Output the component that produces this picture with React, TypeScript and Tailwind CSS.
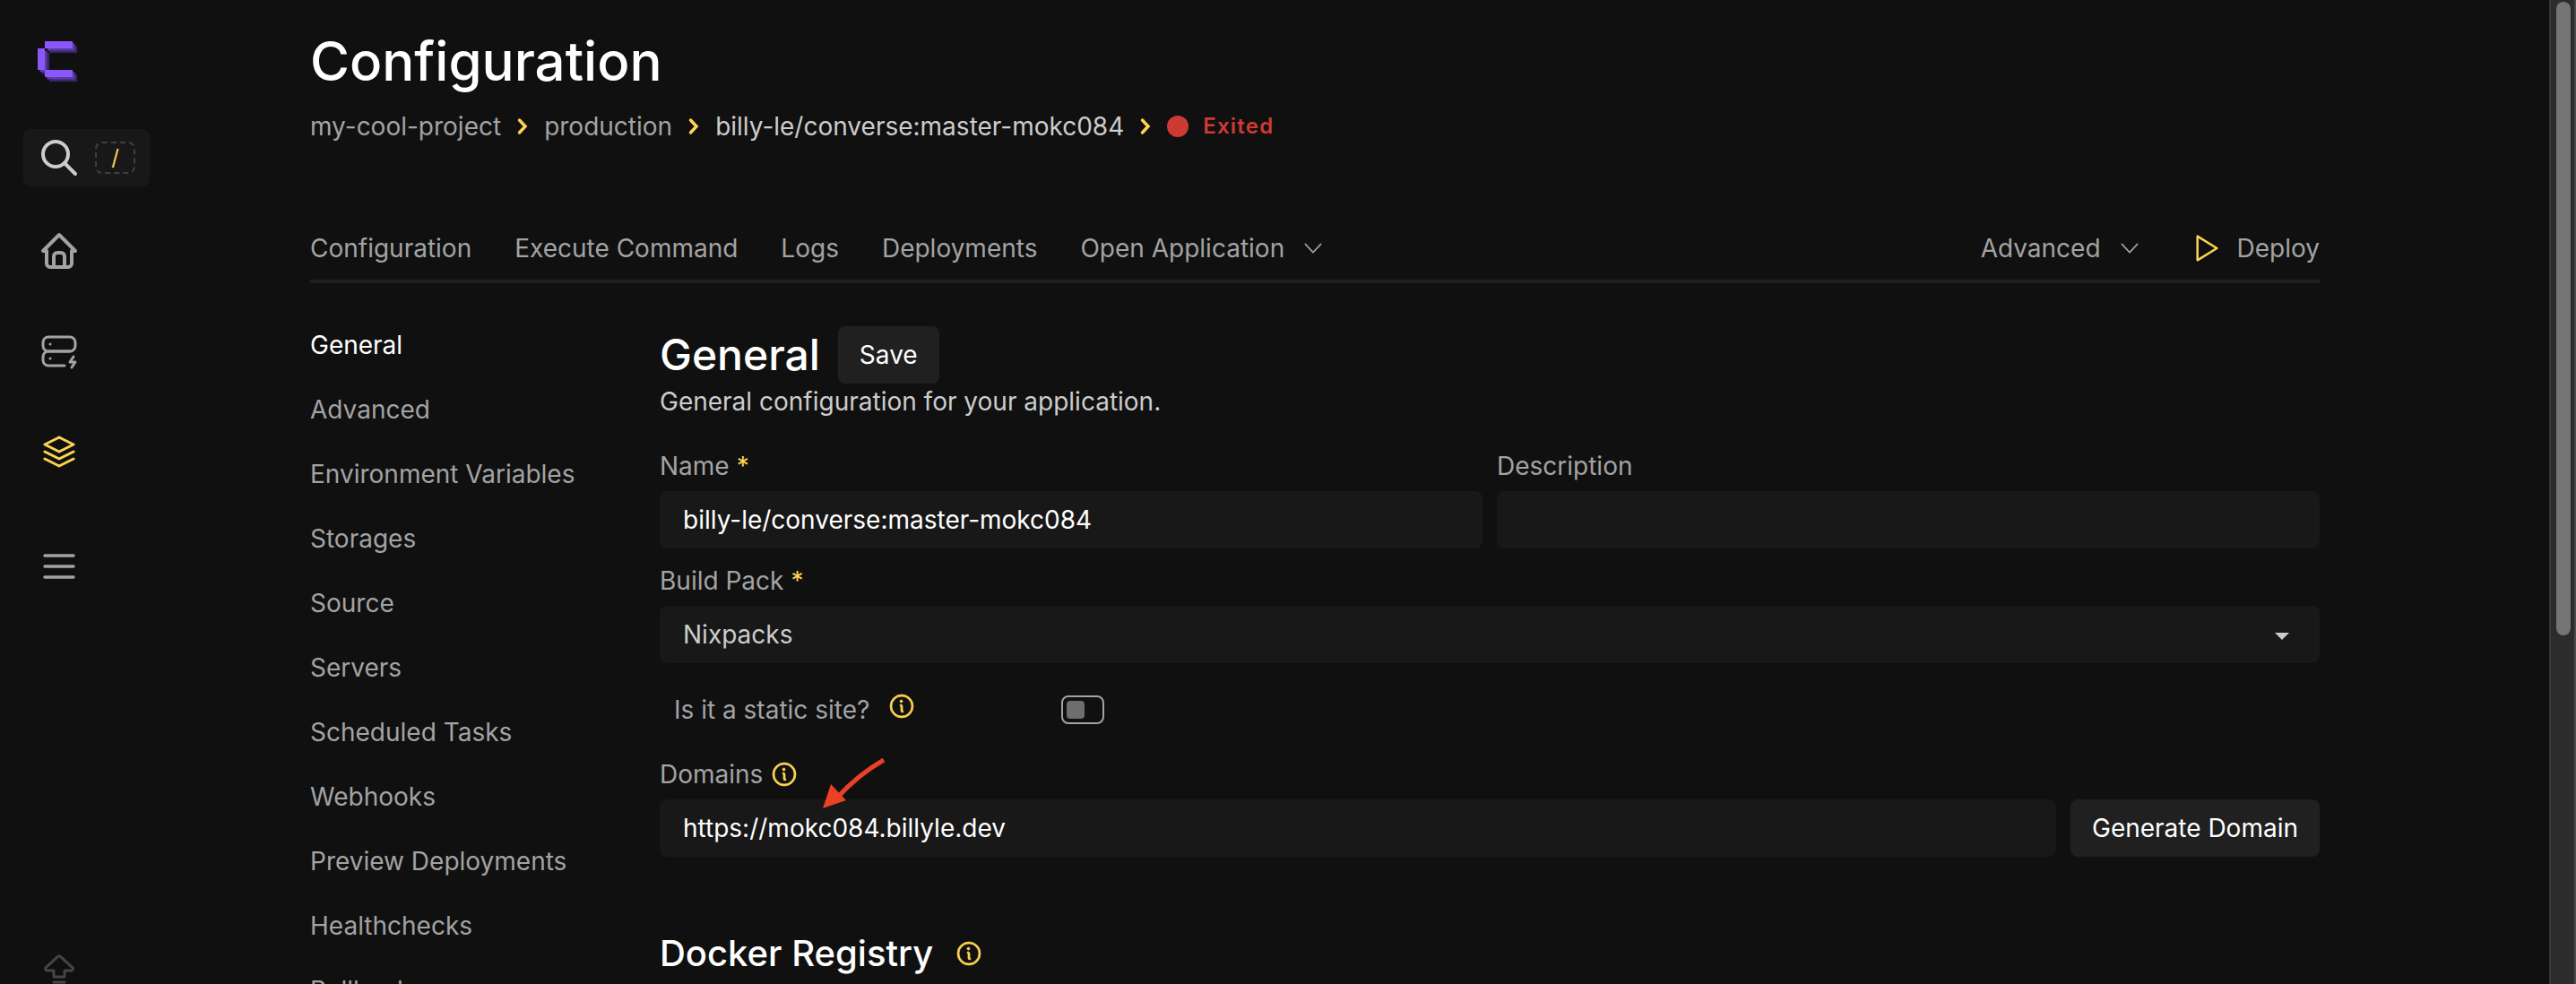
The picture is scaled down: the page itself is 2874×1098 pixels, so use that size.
import type { ReactNode } from "react";

function Logo() {
  return (
    <svg viewBox="0 0 44 45" className="h-[45px] w-11" aria-hidden="true">
      <g fill="#3a2569">
        <path d="M13 5h31v8H13zM5 13h8v24H5zM13 37h31v8H13z" />
      </g>
      <g fill="#5a3ba6">
        <path d="M10.500 2.500h31v8h-31zM2.500 10.500h8v24h-8zM10.500 34.500h31v8h-31z" />
      </g>
      <path fill="#101010" d="M8 8h3v3H8z" />
      <g fill="#8a57fb">
        <path d="M8 0h31v8H8zM0 8h8v24H0zM8 32h31v8H8z" />
      </g>
    </svg>
  );
}

function Stroke({ children, size, width = 2 }: { children: ReactNode; size: string; width?: number }) {
  return (
    <svg
      viewBox="0 0 24 24"
      fill="none"
      stroke="currentColor"
      strokeWidth={width}
      strokeLinecap="round"
      strokeLinejoin="round"
      className={size}
      aria-hidden="true"
    >
      {children}
    </svg>
  );
}

function ChevronRight() {
  return (
    <svg viewBox="0 0 24 24" className="mx-3 size-6 text-[#fcd452]" aria-hidden="true">
      <path d="M8.500 5l6.500 7-6.500 7" fill="none" stroke="currentColor" strokeWidth="3.500" strokeLinecap="round" />
    </svg>
  );
}

function ChevronDown() {
  return (
    <Stroke size="size-8" width={1.2}>
      <path d="M18.500 8.500 12 15.500 5.500 8.500" />
    </Stroke>
  );
}

function Info({ label }: { label: string }) {
  return (
    <button type="button" aria-label={label} className="text-[#fcd452]">
      <svg viewBox="0 0 256 256" className="size-8" aria-hidden="true">
        <path
          fill="currentColor"
          stroke="currentColor"
          strokeWidth="6"
          d="M128 24a104 104 0 1 0 104 104A104.110 104.110 0 0 0 128 24m0 192a88 88 0 1 1 88-88a88.100 88.100 0 0 1-88 88m16-40a8 8 0 0 1-8 8a16 16 0 0 1-16-16v-40a8 8 0 0 1 0-16a16 16 0 0 1 16 16v40a8 8 0 0 1 8 8m-32-92a12 12 0 1 1 12 12a12 12 0 0 1-12-12"
        />
      </svg>
    </button>
  );
}

const sections = [
  "General",
  "Advanced",
  "Environment Variables",
  "Storages",
  "Source",
  "Servers",
  "Scheduled Tasks",
  "Webhooks",
  "Preview Deployments",
  "Healthchecks",
  "Rollback",
];

const field = "h-16 w-full min-w-0 rounded-lg bg-[#181818] px-[26px] text-white outline-none";
const button = "h-16 shrink-0 rounded-lg bg-[#202020] px-6 text-white";

function Label({ id, children, required }: { id: string; children: ReactNode; required?: boolean }) {
  return (
    <label htmlFor={id} className="block text-[#a3a3a3]">
      {children}
      {required && <span className="ml-2 text-[#fcd452]">*</span>}
    </label>
  );
}

function SideNav() {
  return (
    <nav aria-label="Main" className="flex w-48 shrink-0 flex-col pl-[26px] text-[#a3a3a3]">
      <a href="#" aria-label="Dashboard" className="mt-[46px] ml-4">
        <Logo />
      </a>
      <button type="button" aria-label="Search" className="mt-[53px] flex h-16 w-[141px] items-center gap-4 rounded-lg bg-[#181818] pl-4 text-[#cccccc]">
        <Stroke size="size-12">
          <circle cx="10" cy="10" r="7" />
          <path d="m21 21-6-6" />
        </Stroke>
        <kbd className="flex h-9 w-[45px] items-center justify-center rounded-lg border-2 border-dashed border-[#404040] font-[Inter] text-2xl text-[#fcd452]">/</kbd>
      </button>
      <a href="#" aria-label="Home" className="mt-12 ml-4">
        <Stroke size="size-12">
          <path d="M5 12H3l9-9 9 9h-2M5 12v7a2 2 0 0 0 2 2h10a2 2 0 0 0 2-2v-7" />
          <path d="M9 21v-6a2 2 0 0 1 2-2h2a2 2 0 0 1 2 2v6" />
        </Stroke>
      </a>
      <a href="#" aria-label="Servers" className="mt-16 ml-4">
        <Stroke size="size-12" width={1.5}>
          <rect x="3" y="4" width="18" height="8" rx="3" />
          <path d="M15 20H6a3 3 0 0 1-3-3v-2a3 3 0 0 1 3-3h12M7 8v.01M7 16v.01M20 15l-2 3h3l-2 3" />
        </Stroke>
      </a>
      <a href="#" aria-label="Projects" className="mt-16 ml-4 text-[#fcd452]">
        <Stroke size="size-12" width={1.5}>
          <path d="M12 4 4 8l8 4 8-4-8-4M4 12l8 4 8-4M4 16l8 4 8-4" />
        </Stroke>
      </a>
      <button type="button" aria-label="Menu" className="mt-20 ml-4 self-start">
        <Stroke size="size-12">
          <path d="M4 6h16M4 12h16M4 18h16" strokeWidth="1.700" />
        </Stroke>
      </button>
      <button type="button" aria-label="Upgrade" className="mt-auto -mb-2.5 ml-4 self-start text-[#454545]">
        <Stroke size="size-12" width={1.5}>
          <path d="M9 11.500H5.200a1 1 0 0 1-.600-1.700L11.300 3.700a1 1 0 0 1 1.400 0L19.400 9.800a1 1 0 0 1-.600 1.700H15V15H9zM9 18h6M9 21h6" />
        </Stroke>
      </button>
    </nav>
  );
}

function PageHeader() {
  return (
    <header>
      <h1 className="text-[60px] leading-[72px] font-medium text-white">Configuration</h1>
      <nav aria-label="Breadcrumb" className="mt-[17px] flex items-center">
        <a href="#" className="text-[#a3a3a3]">my-cool-project</a>
        <ChevronRight />
        <a href="#" className="text-[#a3a3a3]">production</a>
        <ChevronRight />
        <a href="#">billy-le/converse:master-mokc084</a>
        <ChevronRight />
        <span className="size-6 rounded-full bg-[#cd3a34]" />
        <span className="ml-4 text-2xl font-semibold tracking-wider text-[#cd3a34]">Exited</span>
      </nav>
      <div className="mt-24 flex items-center justify-between border-b-4 border-[#202020] pb-[15px] text-[#a3a3a3]">
        <nav aria-label="Application" className="flex items-center gap-12">
          <a href="#">Configuration</a>
          <a href="#">Execute Command</a>
          <a href="#">Logs</a>
          <a href="#">Deployments</a>
          <button type="button" className="flex items-center gap-4">
            Open Application
            <ChevronDown />
          </button>
        </nav>
        <div className="flex items-center gap-12">
          <button type="button" className="flex items-center gap-4">
            Advanced
            <ChevronDown />
          </button>
          <button type="button" className="flex items-center gap-4">
            <span className="text-[#fcd452]">
              <Stroke size="size-10" width={1.5}>
                <path d="M7 4v16l13-8z" />
              </Stroke>
            </span>
            Deploy
          </button>
        </div>
      </div>
    </header>
  );
}

function Arrow() {
  return (
    <svg viewBox="0 0 72 60" className="pointer-events-none absolute top-0 left-[182px] h-[60px] w-[72px]" aria-hidden="true">
      <path d="M68 4Q40 20 16 46" fill="none" stroke="#ea4025" strokeWidth="5" />
      <path d="M0 58 9 31 26 49z" fill="#ea4025" />
    </svg>
  );
}

function GeneralForm() {
  return (
    <form className="min-w-0 flex-1">
      <div className="flex items-center gap-5">
        <h2 className="text-5xl leading-[64px] font-medium text-white">General</h2>
        <button type="button" className={button}>Save</button>
      </div>
      <p>General configuration for your application.</p>

      <div className="mt-8 grid grid-cols-2 gap-4">
        <div className="flex flex-col gap-2">
          <Label id="name" required>Name</Label>
          <input id="name" defaultValue="billy-le/converse:master-mokc084" className={field} />
        </div>
        <div className="flex flex-col gap-2">
          <Label id="description">Description</Label>
          <input id="description" className={field} />
        </div>
        <div className="col-span-2 flex flex-col gap-2">
          <Label id="build-pack" required>Build Pack</Label>
          <div className="relative">
            <select id="build-pack" className="h-16 w-full appearance-none rounded-lg bg-[#181818] px-[26px] outline-none">
              <option>Nixpacks</option>
            </select>
            <svg viewBox="0 0 16 8" className="pointer-events-none absolute top-[30px] right-[34px] h-2 w-4" aria-hidden="true">
              <path d="M0 0h16L8 8z" fill="#cccccc" />
            </svg>
          </div>
        </div>
      </div>

      <div className="mt-8 flex w-[496px] items-center pl-4">
        <label htmlFor="static-site" className="mr-5 text-[#a3a3a3]">Is it a static site?</label>
        <span className="flex pb-2">
          <Info label="About static sites" />
        </span>
        <input
          id="static-site"
          type="checkbox"
          className="ml-auto h-8 w-12 appearance-none rounded-lg border-2 border-[#a3a3a3] p-1 before:block before:h-5 before:w-5 before:rounded-sm before:bg-[#6e6e6e]"
        />
      </div>

      <div className="relative mt-8 flex items-end gap-4">
        <div className="flex min-w-0 flex-1 flex-col gap-2">
          <div className="flex items-center gap-2">
            <Label id="domains">Domains</Label>
            <Info label="About domains" />
          </div>
          <input id="domains" defaultValue="https://mokc084.billyle.dev" className={field} />
        </div>
        <button type="button" className={button}>Generate Domain</button>
        <Arrow />
      </div>

      <h3 className="mt-20 flex items-center gap-6 text-[40px] leading-[56px] font-medium text-white">
        Docker Registry
        <Info label="About the registry" />
      </h3>
    </form>
  );
}

export default function App() {
  return (
    <div className="flex h-screen overflow-hidden bg-[#101010] font-[Inter,sans-serif] text-[28px] leading-10 text-[#cccccc]">
      <SideNav />
      <main className="min-w-0 flex-1 pt-8 pr-64 pl-[154px]">
        <PageHeader />
        <div className="mt-12 flex">
          <nav aria-label="Sections" className="flex w-[390px] shrink-0 flex-col gap-8 pt-px text-[#a3a3a3]">
            {sections.map((s) => (
              <a key={s} href="#" className={s === "General" ? "text-white" : ""}>{s}</a>
            ))}
          </nav>
          <GeneralForm />
        </div>
      </main>
      <div className="flex w-[30px] shrink-0 border-r-2 border-l-2 border-r-[#4a4a4a] border-l-[#383838] bg-[#2c2c2c] pt-0.5 pl-1.5">
        <div className="h-[707px] w-4 rounded-full bg-[#757575]" />
      </div>
    </div>
  );
}
